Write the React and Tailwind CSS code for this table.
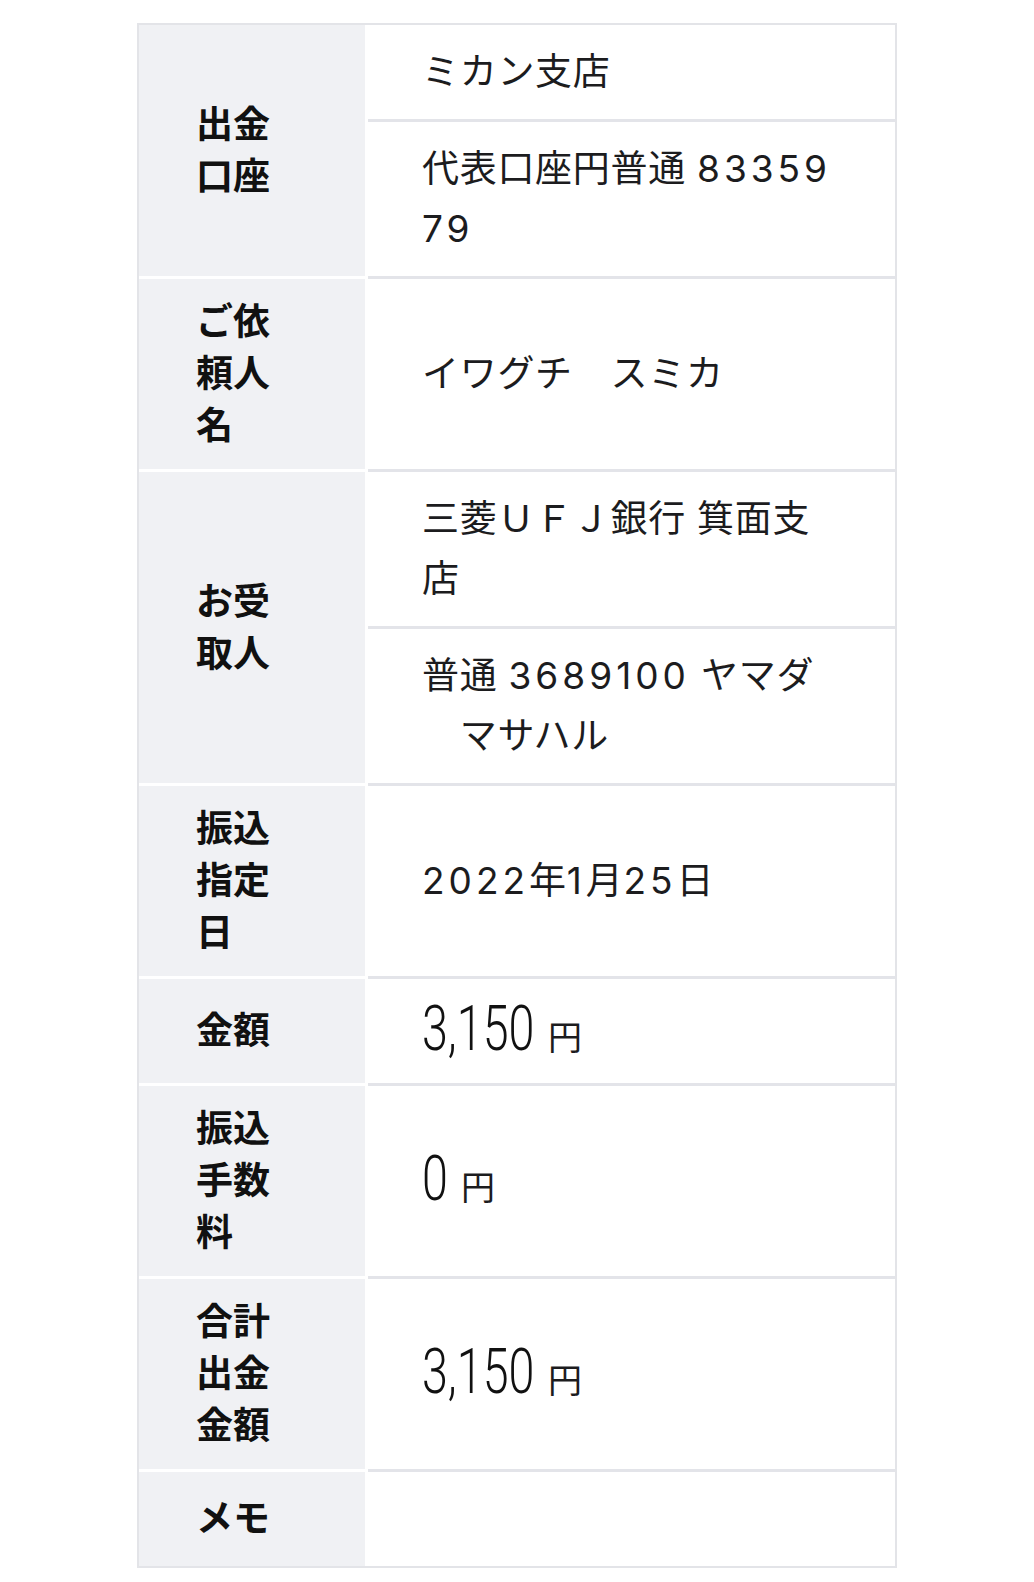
import React from "react";

const FONT = { fontFamily: 'Inter, "Noto Sans CJK JP", sans-serif' };

function N({ children }) {
  return <span className="tracking-[4px]">{children}</span>;
}

function Label({ children, last }) {
  return (
    <div
      className={
        "w-[226px] shrink-0 bg-[#f0f1f4] flex items-center pl-[57px] py-[17px] " +
        (last ? "" : "border-b-[3px] border-white")
      }
    >
      <div className="w-[80px] text-[37px] leading-[52px] font-bold text-[#111111]">
        {children}
      </div>
    </div>
  );
}

function Cell({ children, border }) {
  return (
    <div
      className={
        "flex-1 flex items-center pl-[54px] pr-[20px] py-[17px] text-[37px] leading-[60px] tracking-[0.7px] text-[#1c1c1e] " +
        (border ? "border-b-[3px] border-[#e3e4e9]" : "")
      }
    >
      <div>{children}</div>
    </div>
  );
}

function Row({ label, cells, last }) {
  return (
    <div className="flex">
      <Label last={last}>{label}</Label>
      <div
        className={
          "ml-[3px] flex-1 flex flex-col " +
          (last ? "" : "border-b-[3px] border-[#e3e4e9]")
        }
      >
        {cells.map((c, i) => (
          <Cell key={i} border={i < cells.length - 1}>
            {c}
          </Cell>
        ))}
      </div>
    </div>
  );
}

function Amount({ value, width }) {
  return (
    <div className="h-[70px] flex items-center">
      <div className="flex items-baseline pt-[1px]">
        <span className="inline-block" style={{ width }}>
          <span
            className="inline-block origin-left scale-x-[0.74] whitespace-nowrap text-[63px] leading-none font-light tracking-normal text-[#111111]"
            style={{ fontFamily: 'Roboto, "Liberation Sans", sans-serif' }}
          >
            {value}
          </span>
        </span>
        <span className="ml-[14px] text-[34px] leading-none tracking-normal text-[#1c1c1e]">円</span>
      </div>
    </div>
  );
}

export default function App() {
  return (
    <div className="min-h-[1582px] bg-white pt-[23px] pl-[137px]" style={FONT}>
      <div className="w-[760px] border-2 border-[#e3e4e8]">
        <Row
          label="出金口座"
          cells={[
            "ミカン支店",
            <>
              代表口座円普通 <N>83359</N>
              <br />
              <N>79</N>
            </>,
          ]}
        />
        <Row label="ご依頼人名" cells={["イワグチ\u3000スミカ"]} />
        <Row
          label="お受取人"
          cells={[
            <>
              {"三菱ＵＦＪ銀行 箕面支"}
              <br />
              {"店"}
            </>,
            <>
              {"普通 "}
              <N>3689100</N>
              {" ヤマダ"}
              <br />
              {"\u3000マサハル"}
            </>,
          ]}
        />
        <Row
          label="振込指定日"
          cells={[
            <>
              <N>2022</N>年<N>1</N>月<N>25</N>日
            </>,
          ]}
        />
        <Row label="金額" cells={[<Amount value="3,150" width="112px" />]} />
        <Row label="振込手数料" cells={[<Amount value="0" width="25px" />]} />
        <Row label="合計出金金額" cells={[<Amount value="3,150" width="112px" />]} />
        <Row label="メモ" cells={[<div className="h-[60px]" />]} last />
      </div>
    </div>
  );
}
